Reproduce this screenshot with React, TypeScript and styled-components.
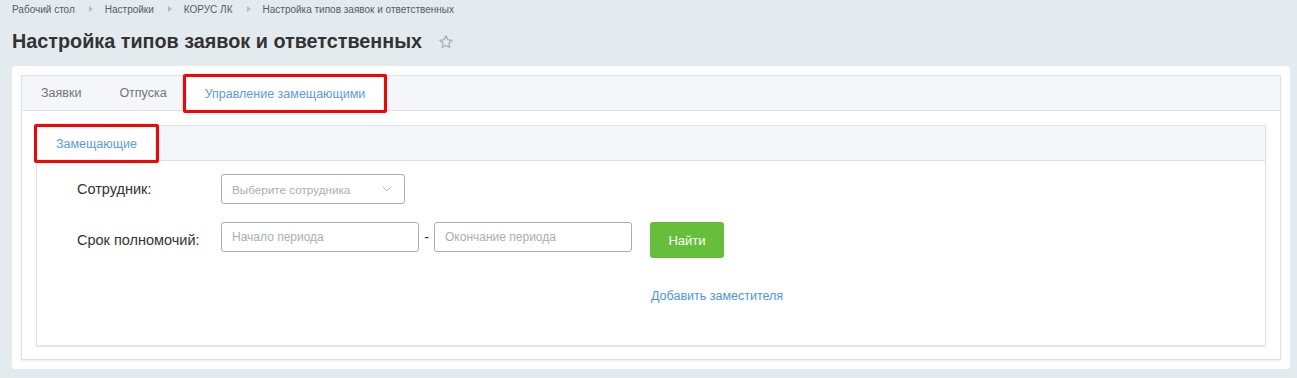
import React from "react";
import styled, { createGlobalStyle } from "styled-components";

const Global = createGlobalStyle`
  html, body { margin: 0; padding: 0; }
  body {
    background: #e4ebee;
    font-family: "Liberation Sans", Arial, sans-serif;
  }
`;

const Page = styled.div`
  width: 1297px;
  height: 378px;
  box-sizing: border-box;
  padding: 0 7px 9px 12px;
  display: flex;
  flex-direction: column;
  background: #e4ebee;
`;

const Crumbs = styled.nav`
  display: flex;
  align-items: center;
  height: 18px;
  font-size: 10px;
  color: #535c69;
`;

const Crumb = styled.span`
  white-space: nowrap;
`;

const Sep = styled.span`
  display: inline-block;
  width: 0;
  height: 0;
  border-top: 3px solid transparent;
  border-bottom: 3px solid transparent;
  border-left: 4px solid #b5bcc4;
  margin: 0 12px 0 14px;
`;

const TitleRow = styled.div`
  display: flex;
  align-items: center;
  height: 30px;
  margin-top: 8px;
`;

const Title = styled.h1`
  margin: 0;
  font-size: 19.8px;
  font-weight: bold;
  color: #333;
  white-space: nowrap;
`;

const Star = styled.svg`
  margin-left: 16px;
  margin-top: 2px;
`;

const Card = styled.div`
  margin-top: 10px;
  flex: 1;
  background: #fff;
  border-radius: 4px;
  padding: 9px;
  display: flex;
`;

const Tabs = styled.div`
  flex: 1;
  border: 1px solid #dfe1e8;
  box-shadow: 0 1px 2px rgba(0, 0, 0, 0.08);
  display: flex;
  flex-direction: column;
  background: #fff;
`;

const TabBar = styled.div`
  display: flex;
  height: 34px;
  background: #f5f6f9;
  border-bottom: 1px solid #dfe1e8;
`;

const Tab = styled.div<{ $active?: boolean; $marked?: boolean }>`
  position: relative;
  display: flex;
  align-items: center;
  padding: 0 19px;
  font-size: 12.5px;
  color: ${(p) => (p.$active ? "#5a9be8" : "#6e757e")};
  background: ${(p) => (p.$active ? "#fff" : "transparent")};
  margin-bottom: ${(p) => (p.$active ? "-1px" : "0")};
  white-space: nowrap;
  ${(p) =>
    p.$marked &&
    `
    &::after {
      content: "";
      position: absolute;
      left: -3px; right: -3px; top: -2px; bottom: -2px;
      border: 3px solid #ff0000;
      border-radius: 2px;
      pointer-events: none;
    }
  `}
`;

const TabBody = styled.div`
  flex: 1;
  padding: 14px 14px 13px 14px;
  display: flex;
`;

const Panel = styled.div`
  flex: 1;
  border: 1px solid #dfe1e8;
  box-shadow: 0 1px 2px rgba(0, 0, 0, 0.1);
  display: flex;
  flex-direction: column;
`;

const Form = styled.div`
  padding: 13px 0 0 40px;
  display: grid;
  grid-template-columns: 144px auto;
  row-gap: 18px;
  align-items: center;
  justify-content: start;
`;

const Label = styled.label`
  font-size: 14.5px;
  color: #333;
  white-space: nowrap;
`;

const Select = styled.div`
  width: 184px;
  height: 30px;
  box-sizing: border-box;
  border: 1px solid #a7adb5;
  border-radius: 3px;
  display: flex;
  align-items: center;
  justify-content: space-between;
  padding: 0 12px 0 10px;
  font-size: 11.7px;
  color: #a9aeb5;
`;

const Controls = styled.div`
  display: flex;
  align-items: flex-start;
`;

const Input = styled.input`
  width: 198px;
  height: 30px;
  box-sizing: border-box;
  border: 1px solid #a7adb5;
  border-radius: 3px;
  padding: 0 10px;
  font-family: inherit;
  font-size: 12px;
  color: #333;
  outline: none;
  &::placeholder { color: #a9aeb5; }
`;

const Dash = styled.span`
  width: 15px;
  text-align: center;
  font-size: 14px;
  line-height: 30px;
  color: #333;
`;

const Button = styled.button`
  margin-left: 18px;
  width: 74px;
  height: 36px;
  border: none;
  border-radius: 3px;
  background: #66bf3a;
  color: #fff;
  font-family: inherit;
  font-size: 13px;
  font-weight: normal;
`;

const Link = styled.a`
  grid-column: 2;
  margin-left: 430px;
  margin-top: 13px;
  font-size: 12.5px;
  color: #4a96e6;
  text-decoration: none;
  white-space: nowrap;
`;

export default function App() {
  return (
    <>
      <Global />
      <Page>
        <Crumbs>
          <Crumb>Рабочий стол</Crumb>
          <Sep />
          <Crumb>Настройки</Crumb>
          <Sep />
          <Crumb>КОРУС ЛК</Crumb>
          <Sep />
          <Crumb>Настройка типов заявок и ответственных</Crumb>
        </Crumbs>
        <TitleRow>
          <Title>Настройка типов заявок и ответственных</Title>
          <Star width="16" height="16" viewBox="0 0 24 24">
            <path
              d="M12 2.8l2.8 5.8 6.3.9-4.6 4.4 1.1 6.3L12 17.2l-5.6 3 1.1-6.3-4.6-4.4 6.3-.9z"
              fill="none"
              stroke="#a9b0b8"
              strokeWidth="2"
              strokeLinejoin="round"
            />
          </Star>
        </TitleRow>
        <Card>
          <Tabs>
            <TabBar>
              <Tab>Заявки</Tab>
              <Tab>Отпуска</Tab>
              <Tab $active $marked>Управление замещающими</Tab>
            </TabBar>
            <TabBody>
              <Panel>
                <TabBar>
                  <Tab $active $marked>Замещающие</Tab>
                </TabBar>
                <Form>
                  <Label>Сотрудник:</Label>
                  <Select>
                    <span>Выберите сотрудника</span>
                    <svg width="10" height="6" viewBox="0 0 10 6">
                      <path d="M0.5 0.5L5 5L9.5 0.5" fill="none" stroke="#b8bdc4" strokeWidth="1" />
                    </svg>
                  </Select>
                  <Label>Срок полномочий:</Label>
                  <Controls>
                    <Input placeholder="Начало периода" />
                    <Dash>-</Dash>
                    <Input placeholder="Окончание периода" />
                    <Button>Найти</Button>
                  </Controls>
                  <Link href="#">Добавить заместителя</Link>
                </Form>
              </Panel>
            </TabBody>
          </Tabs>
        </Card>
      </Page>
    </>
  );
}
